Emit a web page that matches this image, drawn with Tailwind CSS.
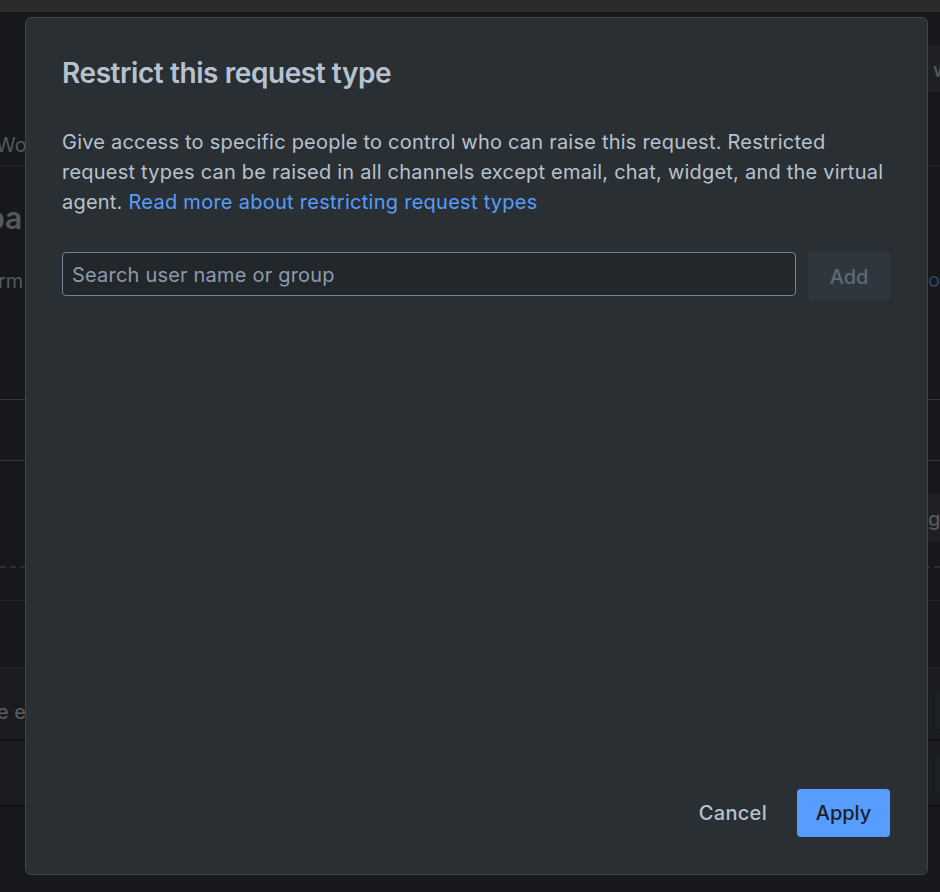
<!DOCTYPE html>
<html lang="en">
<head>
    <meta charset="UTF-8">
    <meta name="viewport" content="width=device-width, initial-scale=1.0">
    <title>Restrict this request type</title>
    <script src="https://cdn.jsdelivr.net/npm/@tailwindcss/browser@4"></script>
</head>
<body class="relative w-[940px] h-[892px] overflow-hidden bg-[#16181b] font-['Inter',sans-serif] antialiased">
    <!-- page behind the dialog -->
    <div class="h-[12px] bg-[#2b2b2c]"></div>
    <div class="flex flex-col text-[#55585d]">
        <div class="relative h-[154px] border-b border-[#24262a] flex">
            <div class="mt-[118px] text-[20px] leading-[30px] -ml-[4px]">Wo</div>
            <div class="absolute right-0 top-[33px] w-[12px] h-[47px] bg-[#1e2024] text-[20px] font-medium leading-[50px] pl-[5px] overflow-hidden">w</div>
        </div>
        <div class="h-[234px] border-b border-[#34373c] flex justify-between">
            <div class="flex flex-col -ml-[14px]">
                <div class="mt-[32px] text-[30px] leading-[40px] font-semibold">pa</div>
                <div class="mt-[28px] ml-[12px] text-[20px] leading-[30px]">rm</div>
            </div>
            <div class="mt-[99px] text-[20px] leading-[30px] text-[#2c4670]">o</div>
        </div>
        <div class="h-[61px] border-b border-[#34373c]"></div>
        <div class="relative h-[140px] border-b border-[#24262a]">
            <div class="mt-[105px] w-full border-t-2 border-dashed border-[#2b2d31] h-0"></div>
            <div class="absolute right-0 top-[33px] w-[12px] h-[48px] bg-[#1e2024] text-[20px] font-medium leading-[50px] overflow-hidden">g</div>
        </div>
        <div class="h-[67px] border-b border-[#24262a]"></div>
        <div class="relative h-[73px] border-b-2 border-[#101114] bg-[#1a1c1f] flex">
            <div class="mt-[29px] -ml-[3px] text-[20px] leading-[30px] text-[#5c5f64]">e e</div>
            <div class="absolute right-0 top-[25px] w-[5px] h-[36px] bg-[#1e2125] rounded-l-[3px]"></div>
        </div>
        <div class="relative h-[66px] border-b-2 border-[#101114] bg-[#1a1c1f]">
            <div class="absolute right-0 top-[15px] w-[5px] h-[36px] bg-[#1e2125] rounded-l-[3px]"></div>
        </div>
    </div>

    <!-- dialog -->
    <div class="absolute left-[25px] top-[17px] w-[903px] h-[858px] flex flex-col bg-[#2a2f33] border border-[#3d444c] rounded-[6px] pt-[35px] pr-[37px] pb-[37px] pl-[36px] text-[#b6c2cf]">
        <h2 class="text-[28px] leading-[40px] font-semibold tracking-[-0.42px]">Restrict this request type</h2>
        <p class="mt-[34px] text-[20px] leading-[30px] tracking-[0.22px]">Give access to specific people to control who can raise this request. Restricted request types can be raised in all channels except email, chat, widget, and the virtual agent. <a class="text-[#579dff] tracking-[0.27px]" href="#">Read more about restricting request types</a></p>
        <div class="mt-[35px] flex items-start gap-[12px]">
            <input class="flex-1 h-[44px] px-[9px] pt-[1px] bg-[#22272b] border border-[#738496] rounded-[4px] text-[20px] tracking-[0.2px] placeholder:text-[#8c9bab] outline-none" type="text" placeholder="Search user name or group">
            <button class="w-[82px] h-[48px] pt-[1px] bg-[#30363d] rounded-[4px] text-[20px] font-medium text-[#5d6a78]">Add</button>
        </div>
        <div class="mt-auto flex items-center justify-end gap-[12px]">
            <button class="h-[48px] px-[18px] text-[20px] font-medium tracking-[0.3px]">Cancel</button>
            <button class="w-[93px] h-[48px] bg-[#579dff] rounded-[4px] text-[20px] font-medium text-[#1d2125]">Apply</button>
        </div>
    </div>
</body>
</html>
